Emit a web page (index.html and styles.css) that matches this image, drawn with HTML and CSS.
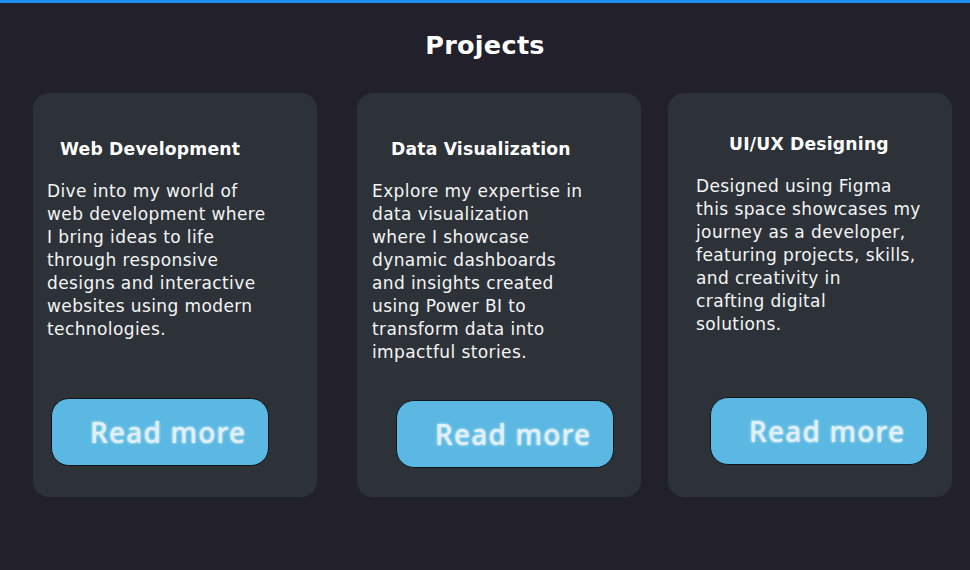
FILE: index.html
```html
<!DOCTYPE html>
<html lang="en">
<head>
<meta charset="utf-8">
<title>Projects</title>
<link rel="stylesheet" href="styles.css">
</head>
<body>
<main class="page">
  <h1 class="title">Projects</h1>
  <section class="cards">
    <article class="card card-web">
      <h2 class="card-title">Web Development</h2>
      <p class="card-text">Dive into my world of<br>web development where<br>I bring ideas to life<br>through responsive<br>designs and interactive<br>websites using modern<br>technologies.</p>
      <button class="btn">Read more</button>
    </article>
    <article class="card card-data">
      <h2 class="card-title">Data Visualization</h2>
      <p class="card-text">Explore my expertise in<br>data visualization<br>where I showcase<br>dynamic dashboards<br>and insights created<br>using Power BI to<br>transform data into<br>impactful stories.</p>
      <button class="btn">Read more</button>
    </article>
    <article class="card card-ui">
      <h2 class="card-title">UI/UX Designing</h2>
      <p class="card-text">Designed using Figma<br>this space showcases my<br>journey as a developer,<br>featuring projects, skills,<br>and creativity in<br>crafting digital<br>solutions.</p>
      <button class="btn">Read more</button>
    </article>
  </section>
</main>
</body>
</html>
```

FILE: styles.css
```css
* { box-sizing: border-box; }
html, body { margin: 0; padding: 0; }
body {
  width: 970px;
  height: 570px;
  overflow: hidden;
  background: #22212b;
  border-top: 3px solid #1e8ff0;
  font-family: "DejaVu Sans", sans-serif;
  color: #ffffff;
}
.page {
  display: flex;
  flex-direction: column;
}
.title {
  margin: 24px 0 0;
  text-align: center;
  font-weight: bold;
  font-size: 25.5px;
  line-height: 36px;
  letter-spacing: 0.3px;
}
.cards {
  display: flex;
  margin-top: 30px;
  padding-left: 33px;
}
.card {
  width: 284px;
  height: 404px;
  background: #2d3238;
  border-radius: 16px;
  display: flex;
  flex-direction: column;
}
.card-data { margin-left: 40px; }
.card-ui { margin-left: 27px; }
.card-title {
  margin: 0;
  font-weight: bold;
  font-size: 17.2px;
  line-height: 24px;
  letter-spacing: 0.2px;
}
.card-text {
  margin: 19px 0 0;
  font-size: 17px;
  line-height: 23px;
  letter-spacing: 0.4px;
  white-space: nowrap;
  color: #f4f5f6;
}
.btn {
  margin-top: auto;
  width: 218px;
  height: 68px;
  background: #5ab8e2;
  border: 1px solid #111418;
  border-radius: 18px;
  color: #dff0f9;
  font-family: "Noto Sans", sans-serif;
  font-size: 28px;
  font-weight: 500;
  letter-spacing: 1.2px;
  text-shadow: 0 0 3px rgba(255, 255, 255, 0.9);
  text-align: left;
  padding: 0 0 0 38px;
}
.card-web { padding: 44px 0 31px 14px; }
.card-web .card-title { padding-left: 13px; }
.card-web .btn { margin-left: 4px; }
.card-data { padding: 44px 0 29px 15px; }
.card-data .card-title { padding-left: 19px; }
.card-data .btn { margin-left: 24px; }
.card-ui { padding: 39px 0 32px 28px; }
.card-ui .card-title { padding-left: 33px; }
.card-ui .btn { margin-left: 14px; }
```
